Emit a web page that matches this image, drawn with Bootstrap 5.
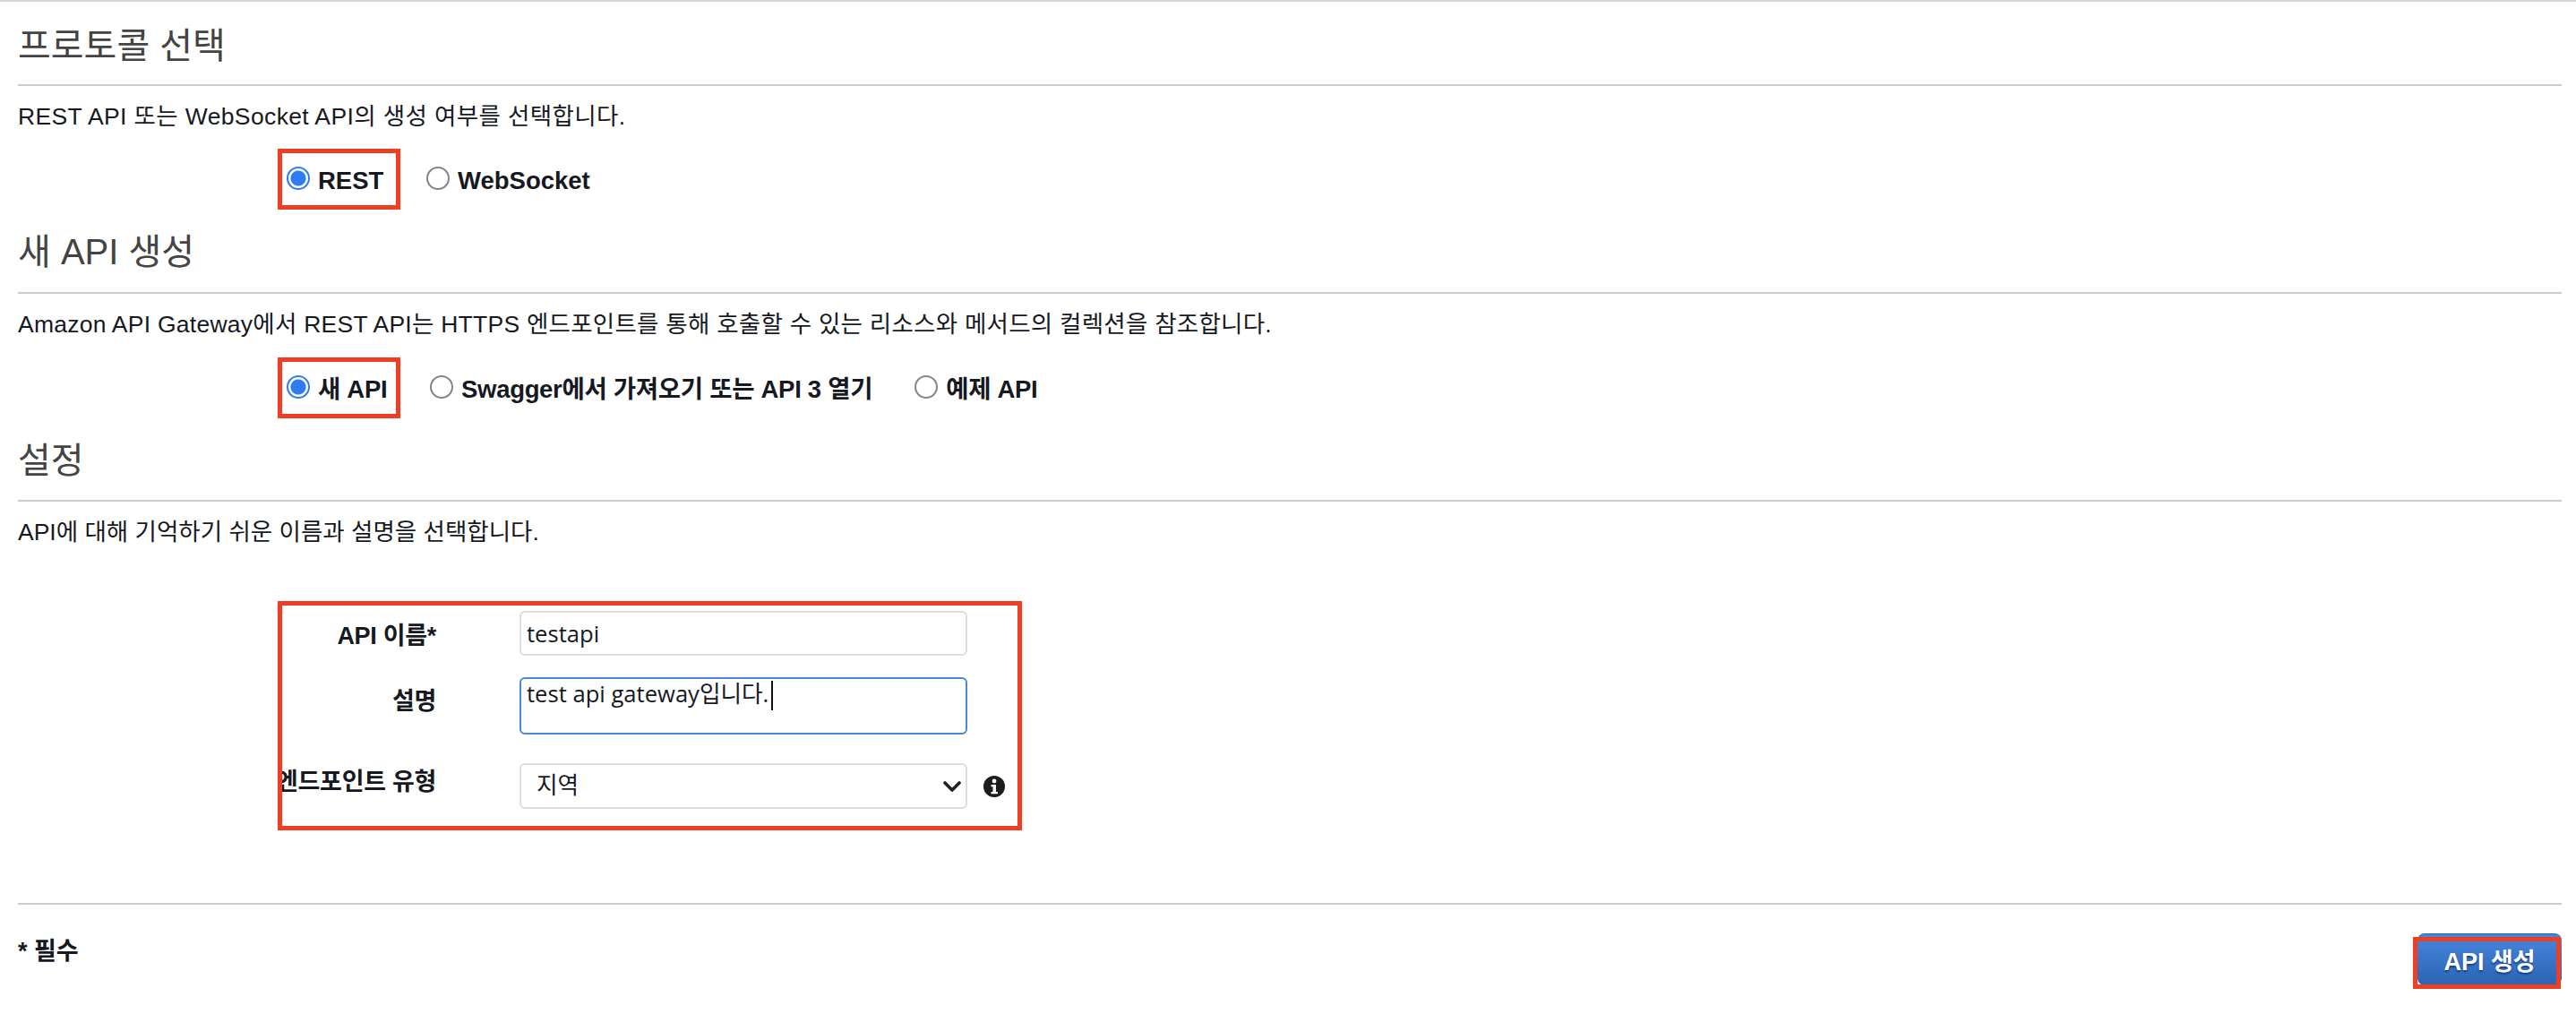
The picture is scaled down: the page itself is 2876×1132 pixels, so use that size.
<!DOCTYPE html>
<html lang="ko">
<head>
    <meta charset="UTF-8">
    <meta name="viewport" content="width=device-width, initial-scale=1.0">
    <title>새 API 생성</title>
    <link href="https://cdn.jsdelivr.net/npm/bootstrap@5.3.3/dist/css/bootstrap.min.css" rel="stylesheet">
    <style>
        body {
            background-color: #fff;
            color: #16191f;
            font-family: "Liberation Sans", "Noto Sans CJK KR", sans-serif;
            font-size: 26.5px;
        }

        .top-bar {
            height: 2px;
            background-color: #d5d5d5;
        }

        .page-wrap {
            padding: 0 16px 32px 20px;
        }

        /* section headings */
        .sect-title {
            height: 70px;
            margin: 23px 0 0;
            border-bottom: 2px solid #ccc;
            color: #444;
            font-size: 40px;
            font-weight: 400;
            line-height: 48px;
        }

        .sect-title.first-title {
            margin-top: 25px;
            height: 69px;
        }

        .sect-title.second-title {
            height: 71px;
        }

        .sect-desc {
            height: 36px;
            margin: 16px 0 0;
            line-height: 36px;
            white-space: nowrap;
        }

        .sect-desc.first-desc {
            letter-spacing: 0.37px;
        }

        .sect-desc.wide-desc {
            letter-spacing: 0.25px;
        }

        /* red annotation boxes */
        .radio-row {
            margin: 18px 0 0 290px;
            height: 68px;
        }

        .radio-row.second-row {
            margin-top: 19px;
        }

        .red-box {
            border: 5px solid #ee3f24;
        }

        .radio-box {
            width: 137px;
            height: 68px;
            padding-left: 5px;
            flex-shrink: 0;
        }

        .radio-item {
            gap: 9px;
            font-size: 27.5px;
            font-weight: 700;
            line-height: 36px;
            white-space: nowrap;
        }

        .radio-item span {
            padding-top: 4px;
        }

        .radio-item span.tight-text {
            letter-spacing: -0.3px;
        }

        .radio-item .form-check-input {
            width: 26px;
            height: 26px;
            margin: -2px 0 0;
            flex-shrink: 0;
            border: 2px solid #858585;
            background-color: #fff;
        }

        .radio-item .form-check-input:checked {
            border-color: #2f7bf5;
            background-color: #fff;
            background-image: radial-gradient(circle, #2f7bf5 0, #2f7bf5 8px, #fff 9px);
        }

        .gap-web { margin-left: 29px; }
        .gap-swagger { margin-left: 33px; }
        .gap-sample { margin-left: 47px; }

        /* form box */
        .form-box {
            width: 831px;
            height: 256px;
            margin: 59px 0 0 290px;
            padding-top: 6px;
            overflow: hidden;
        }

        .field-label {
            width: 172px;
            margin-right: 93px;
            flex-shrink: 0;
            font-size: 27px;
            font-weight: 700;
            line-height: 36px;
            white-space: nowrap;
            letter-spacing: -0.3px;
            display: flex;
            justify-content: flex-end;
        }

        .form-control.api-input,
        .form-select.api-input {
            width: 500px;
            flex-shrink: 0;
            padding: 0 6px;
            border: 2px solid #ddd;
            border-radius: 6px;
            color: #16191f;
            font-family: "Open Sans", "Noto Sans CJK KR", sans-serif;
            font-size: 25.6px;
        }

        .name-input { height: 50px; }
        .form-control.desc-input {
            height: 64px;
            min-height: 0;
            line-height: 34px;
            resize: none;
            border-color: #4a8ad4;
        }

        .form-select.type-select {
            height: 51px;
            padding-left: 17px;
            background-image: url("data:image/svg+xml,%3csvg xmlns='http://www.w3.org/2000/svg' viewBox='0 0 20 14'%3e%3cpath fill='none' stroke='%23222' stroke-width='3.6' stroke-linecap='round' stroke-linejoin='round' d='M2 3l8 8 8-8'/%3e%3c/svg%3e");
            background-position: right 5px center;
            background-size: 20px 14px;
        }

        .desc-row { margin-top: 24px; }
        .type-row { margin-top: 32px; }
        .lbl-name { padding-top: 10px; }
        .lbl-desc { padding-top: 9px; }
        .lbl-type { padding-top: 3px; }

        .desc-wrap { width: 500px; flex-shrink: 0; }

        .text-caret {
            position: absolute;
            left: 281px;
            top: 4px;
            width: 2px;
            height: 33px;
            background-color: #111;
        }

        .info-icon {
            width: 24px;
            height: 24px;
            margin: 14px 0 0 18px;
            flex-shrink: 0;
        }

        /* footer */
        .foot-rule {
            margin: 81px 0 0;
            border: 0;
            border-top: 2px solid #ccc;
            opacity: 1;
        }

        .foot-row {
            margin-top: 32px;
        }

        .req-note {
            margin-top: 2px;
            font-size: 27px;
            font-weight: 700;
            line-height: 36px;
        }

        .create-wrap {
            width: 161px;
            height: 58px;
        }

        .btn.create-btn {
            width: 161px;
            height: 58px;
            padding: 4px 0 0;
            border: 0;
            border-top: 1px solid #2b5fa8;
            border-radius: 8px;
            background: linear-gradient(#4588e0, #2c62b2);
            color: #fff;
            font-size: 27px;
            font-weight: 700;
            line-height: 32px;
            text-shadow: 0 2px 2px #1d3f78;
            white-space: nowrap;
        }

        .create-mark {
            position: absolute;
            left: -5px;
            top: 4px;
            width: 165px;
            height: 58px;
            pointer-events: none;
        }
    </style>
</head>
<body>
    <div class="top-bar"></div>

    <div class="page-wrap">
        <h2 class="sect-title first-title">프로토콜 선택</h2>
        <p class="sect-desc first-desc">REST API 또는 WebSocket API의 생성 여부를 선택합니다.</p>

        <div class="radio-row d-flex align-items-center">
            <div class="red-box radio-box d-flex align-items-center">
                <label class="radio-item d-flex align-items-center">
                    <input class="form-check-input" type="radio" name="protocol" checked>
                    <span>REST</span>
                </label>
            </div>
            <label class="radio-item gap-web d-flex align-items-center">
                <input class="form-check-input" type="radio" name="protocol">
                <span>WebSocket</span>
            </label>
        </div>

        <h2 class="sect-title second-title">새 API 생성</h2>
        <p class="sect-desc wide-desc">Amazon API Gateway에서 REST API는 HTTPS 엔드포인트를 통해 호출할 수 있는 리소스와 메서드의 컬렉션을 참조합니다.</p>

        <div class="radio-row second-row d-flex align-items-center">
            <div class="red-box radio-box d-flex align-items-center">
                <label class="radio-item d-flex align-items-center">
                    <input class="form-check-input" type="radio" name="source" checked>
                    <span class="tight-text">새 API</span>
                </label>
            </div>
            <label class="radio-item gap-swagger d-flex align-items-center">
                <input class="form-check-input" type="radio" name="source">
                <span class="tight-text">Swagger에서 가져오기 또는 API 3 열기</span>
            </label>
            <label class="radio-item gap-sample d-flex align-items-center">
                <input class="form-check-input" type="radio" name="source">
                <span class="tight-text">예제 API</span>
            </label>
        </div>

        <h2 class="sect-title">설정</h2>
        <p class="sect-desc">API에 대해 기억하기 쉬운 이름과 설명을 선택합니다.</p>

        <div class="red-box form-box">
            <div class="d-flex align-items-start">
                <label class="field-label lbl-name">API 이름*</label>
                <input class="form-control api-input name-input" type="text" value="testapi">
            </div>
            <div class="d-flex align-items-start desc-row">
                <label class="field-label lbl-desc">설명</label>
                <div class="desc-wrap position-relative">
                    <textarea class="form-control api-input desc-input">test api gateway입니다.</textarea>
                    <span class="text-caret"></span>
                </div>
            </div>
            <div class="d-flex align-items-start type-row">
                <label class="field-label lbl-type">엔드포인트 유형</label>
                <select class="form-select api-input type-select">
                    <option>지역</option>
                </select>
                <svg class="info-icon" viewBox="0 0 24 24">
                    <circle cx="12" cy="12" r="12" fill="#1c1c1c"/>
                    <circle cx="12" cy="6" r="2.4" fill="#fff"/>
                    <path d="M8.5 10h5.5v8h2v2.2H8.5V18h2v-5.8h-2z" fill="#fff"/>
                </svg>
            </div>
        </div>

        <hr class="foot-rule">

        <div class="foot-row d-flex justify-content-between align-items-start">
            <div class="req-note">* 필수</div>
            <div class="create-wrap position-relative">
                <button class="btn create-btn" type="button">API 생성</button>
                <div class="red-box create-mark"></div>
            </div>
        </div>
    </div>
</body>
</html>
